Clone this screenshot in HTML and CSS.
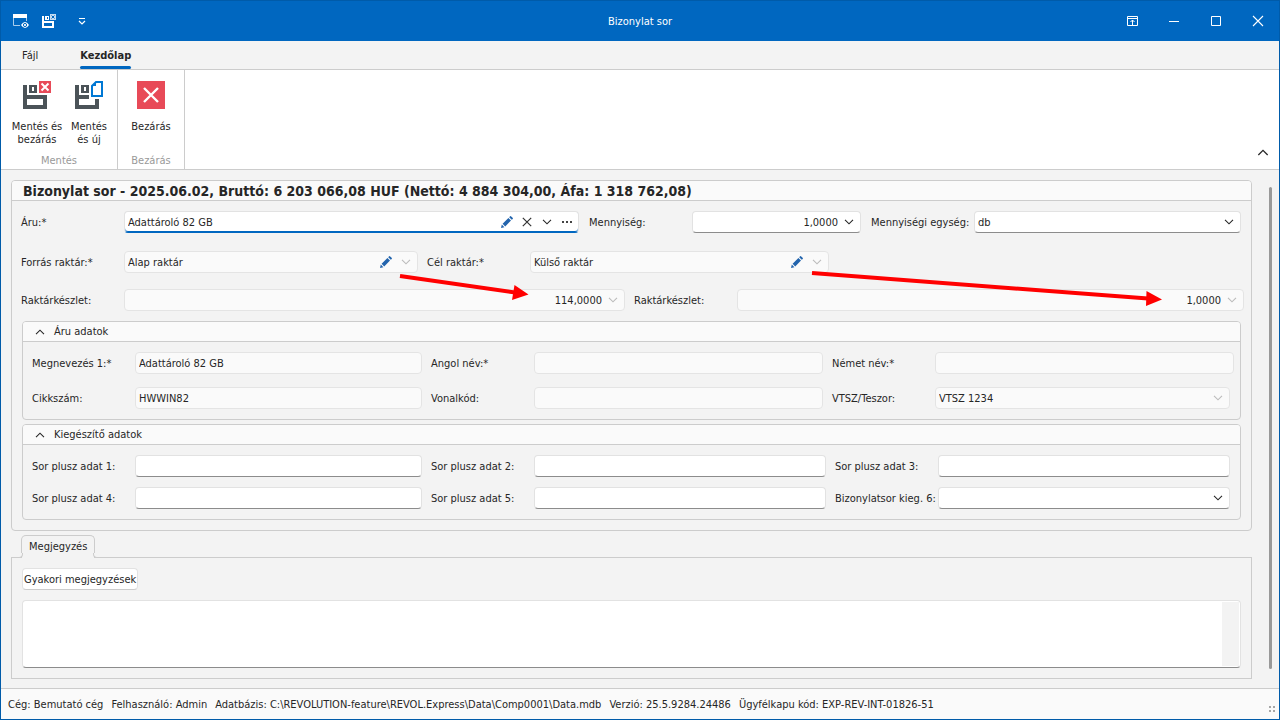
FILE: index.html
```html
<!DOCTYPE html>
<html lang="hu">
<head>
    <meta charset="UTF-8">
    <meta name="viewport" content="width=device-width, initial-scale=1.0">
    <title>Bizonylat sor</title>
    <link rel="stylesheet" href="styles.css">
</head>
<body>

<!-- shared icons -->
<svg class="sprite" aria-hidden="true">
    <symbol id="chevron-down" viewBox="0 0 10 6"><path d="M1 .8 5 4.8 9 .8" fill="none" stroke="currentColor" stroke-width="1.1"/></symbol>
    <symbol id="chevron-up" viewBox="0 0 10 6"><path d="M1 5.2 5 1.2 9 5.2" fill="none" stroke="currentColor" stroke-width="1.1"/></symbol>
    <symbol id="pencil" viewBox="0 0 12 12"><path d="M0 12 .8 8.6 3.4 11.2ZM1.6 7.8 7.4 2 10 4.6 4.2 10.4ZM8.2 1.2 9.1.3Q9.6-.2 10.2.4L11.6 1.8Q12.2 2.4 11.7 2.9L10.8 3.8Z" fill="#2264ad"/></symbol>
</svg>

<div class="window">
    <header class="titlebar">
        <div class="quick-access">
            <button class="title-btn" type="button" aria-label="Nézet">
                <svg width="16" height="14" viewBox="0 0 16 14">
                    <path d="M0 0H14V4H0Z" fill="#fff"/>
                    <path d="M.5 4V11.5H7M13.5 4V7" fill="none" stroke="#a9cdec"/>
                    <path d="M8 11Q12 5 16 11Q12 17 8 11Z" fill="#fff"/>
                    <circle cx="12" cy="11" r="1.6" fill="#fff" stroke="#0067c0"/>
                </svg>
            </button>
            <button class="title-btn" type="button" aria-label="Mentés és bezárás">
                <svg width="14" height="14" viewBox="0 0 14 14">
                    <path d="M0 2H2V7H12V14H0ZM2 9V12H10V9Z" fill="#fff" fill-rule="evenodd"/>
                    <path d="M3 2H7V6H3ZM5 3V5H6V3Z" fill="#fff" fill-rule="evenodd"/>
                    <path d="M8 0H14V6H8Z" fill="#c5dcf1"/>
                    <path d="M9.5 1.5 12.5 4.5M12.5 1.5 9.5 4.5" stroke="#0067c0"/>
                </svg>
            </button>
            <button class="title-btn" type="button" aria-label="Gyorselérés testreszabása">
                <svg width="8" height="8" viewBox="0 0 8 8"><path d="M1 1.5H7M1 4 4 7 7 4" fill="none" stroke="#fff" stroke-width="1.2"/></svg>
            </button>
        </div>
        <h1 class="window-title">Bizonylat sor</h1>
        <div class="window-buttons">
            <button class="title-btn" type="button" aria-label="Menüszalag megjelenítése">
                <svg width="11" height="10" viewBox="0 0 11 10"><path d="M.5.5H10.5V9.5H.5ZM.5 2.5H10.5M5.5 9V4M3.5 6 5.5 4 7.5 6" fill="none" stroke="#fff"/></svg>
            </button>
            <button class="title-btn" type="button" aria-label="Kis méret">
                <svg width="10" height="10" viewBox="0 0 10 10"><path d="M0 5.5H10" stroke="#fff"/></svg>
            </button>
            <button class="title-btn" type="button" aria-label="Teljes méret">
                <svg width="10" height="10" viewBox="0 0 10 10"><path d="M.5.5H9.5V9.5H.5Z" fill="none" stroke="#fff"/></svg>
            </button>
            <button class="title-btn" type="button" aria-label="Ablak bezárása">
                <svg width="12" height="12" viewBox="0 0 12 12"><path d="M1 1 11 11M11 1 1 11" stroke="#fff" stroke-width="1.1"/></svg>
            </button>
        </div>
    </header>

    <nav class="ribbon-tabs">
        <a class="ribbon-tab" href="#">Fájl</a>
        <a class="ribbon-tab active" href="#">Kezdőlap</a>
    </nav>

    <section class="ribbon">
        <div class="ribbon-group">
            <div class="ribbon-items wide">
                <button class="ribbon-btn" type="button">
                    <svg width="28" height="28" viewBox="0 0 28 28">
                        <path d="M0 4H4V14H24V28H0ZM4 18V24H20V18Z" fill="#4b5358" fill-rule="evenodd"/>
                        <path d="M6 4H14V12H6ZM9 6V10H11V6Z" fill="#4b5358" fill-rule="evenodd"/>
                        <path d="M16 0H28V12H16Z" fill="#e84a58"/>
                        <path d="M18.5 2.5 25.5 9.5M25.5 2.5 18.5 9.5" stroke="#fff" stroke-width="2"/>
                    </svg>
                    <span>Mentés és<br>bezárás</span>
                </button>
                <button class="ribbon-btn" type="button">
                    <svg width="28" height="28" viewBox="0 0 28 28">
                        <path d="M0 4H4V14H14V18H4V24H20V18H24V28H0Z" fill="#4b5358"/>
                        <path d="M6 4H14V12H6ZM9 6V10H11V6Z" fill="#4b5358" fill-rule="evenodd"/>
                        <path d="M21 1H27V15H17V5Z" fill="#fff" stroke="#0078d4" stroke-width="2"/>
                        <path d="M21 1V5H17Z" fill="#0078d4"/>
                    </svg>
                    <span>Mentés<br>és új</span>
                </button>
            </div>
            <div class="ribbon-caption">Mentés</div>
        </div>
        <div class="ribbon-group">
            <div class="ribbon-items">
                <button class="ribbon-btn" type="button">
                    <svg width="28" height="28" viewBox="0 0 28 28">
                        <path d="M0 0H28V28H0Z" fill="#e84a58"/>
                        <path d="M7 7 21 21M21 7 7 21" stroke="#fff" stroke-width="2.4"/>
                    </svg>
                    <span>Bezárás</span>
                </button>
            </div>
            <div class="ribbon-caption">Bezárás</div>
        </div>
        <button class="ribbon-collapse" type="button" aria-label="Menüszalag összecsukása">
            <svg width="12" height="7"><use href="#chevron-up"/></svg>
        </button>
    </section>

    <main class="content">
        <div class="form">
            <section class="group">
                <h2 class="group-title">Bizonylat sor - 2025.06.02, Bruttó: 6 203 066,08 HUF (Nettó: 4 884 304,00, Áfa: 1 318 762,08)</h2>
                <div class="group-body">
                    <div class="row row-item">
                        <label for="aru">Áru:*</label>
                        <div class="field focused">
                            <input id="aru" type="text" value="Adattároló 82 GB">
                            <button class="field-btn" type="button" aria-label="Szerkesztés"><svg width="12" height="12"><use href="#pencil"/></svg></button>
                            <button class="field-btn" type="button" aria-label="Törlés"><svg width="10" height="10" viewBox="0 0 10 10"><path d="M.8.8 9.2 9.2M9.2.8.8 9.2" stroke="#333" stroke-width="1.2"/></svg></button>
                            <button class="field-btn" type="button" aria-label="Lista"><svg width="10" height="6"><use href="#chevron-down"/></svg></button>
                            <button class="field-btn" type="button" aria-label="Keresés"><svg width="10" height="2" viewBox="0 0 10 2"><path d="M0 0H2V2H0ZM4 0H6V2H4ZM8 0H10V2H8Z" fill="#444"/></svg></button>
                        </div>
                        <label for="mennyiseg">Mennyiség:</label>
                        <div class="field number">
                            <input id="mennyiseg" type="text" value="1,0000">
                            <button class="field-btn" type="button" aria-label="Számológép"><svg width="10" height="6"><use href="#chevron-down"/></svg></button>
                        </div>
                        <label for="egyseg">Mennyiségi egység:</label>
                        <div class="field">
                            <select id="egyseg"><option>db</option></select>
                            <svg class="select-arrow" width="10" height="6"><use href="#chevron-down"/></svg>
                        </div>
                    </div>
                    <div class="row row-stores">
                        <label for="forras">Forrás raktár:*</label>
                        <div class="field readonly">
                            <input id="forras" type="text" value="Alap raktár" readonly>
                            <button class="field-btn" type="button" aria-label="Szerkesztés"><svg width="12" height="12"><use href="#pencil"/></svg></button>
                            <button class="field-btn" type="button" aria-label="Lista"><svg width="10" height="6"><use href="#chevron-down"/></svg></button>
                        </div>
                        <label for="cel">Cél raktár:*</label>
                        <div class="field readonly">
                            <input id="cel" type="text" value="Külső raktár" readonly>
                            <button class="field-btn" type="button" aria-label="Szerkesztés"><svg width="12" height="12"><use href="#pencil"/></svg></button>
                            <button class="field-btn" type="button" aria-label="Lista"><svg width="10" height="6"><use href="#chevron-down"/></svg></button>
                        </div>
                    </div>
                    <div class="row row-stock">
                        <label for="keszlet1">Raktárkészlet:</label>
                        <div class="field number readonly">
                            <input id="keszlet1" type="text" value="114,0000" readonly>
                            <button class="field-btn" type="button" aria-label="Számológép"><svg width="10" height="6"><use href="#chevron-down"/></svg></button>
                        </div>
                        <label for="keszlet2">Raktárkészlet:</label>
                        <div class="field number readonly">
                            <input id="keszlet2" type="text" value="1,0000" readonly>
                            <button class="field-btn" type="button" aria-label="Számológép"><svg width="10" height="6"><use href="#chevron-down"/></svg></button>
                        </div>
                    </div>

                    <section class="group subgroup">
                        <h3 class="subgroup-title">
                            <button class="collapse-btn" type="button"><svg width="10" height="6"><use href="#chevron-up"/></svg>Áru adatok</button>
                        </h3>
                        <div class="group-body">
                            <div class="row row-names">
                                <label for="nev1">Megnevezés 1:*</label>
                                <div class="field readonly"><input id="nev1" type="text" value="Adattároló 82 GB" readonly></div>
                                <label for="angol">Angol név:*</label>
                                <div class="field readonly"><input id="angol" type="text" readonly></div>
                                <label for="nemet">Német név:*</label>
                                <div class="field readonly"><input id="nemet" type="text" readonly></div>
                            </div>
                            <div class="row row-codes">
                                <label for="cikkszam">Cikkszám:</label>
                                <div class="field readonly"><input id="cikkszam" type="text" value="HWWIN82" readonly></div>
                                <label for="vonalkod">Vonalkód:</label>
                                <div class="field readonly"><input id="vonalkod" type="text" readonly></div>
                                <label for="vtsz">VTSZ/Teszor:</label>
                                <div class="field readonly">
                                    <select id="vtsz" disabled><option>VTSZ 1234</option></select>
                                    <svg class="select-arrow" width="10" height="6"><use href="#chevron-down"/></svg>
                                </div>
                            </div>
                        </div>
                    </section>

                    <section class="group subgroup">
                        <h3 class="subgroup-title">
                            <button class="collapse-btn" type="button"><svg width="10" height="6"><use href="#chevron-up"/></svg>Kiegészítő adatok</button>
                        </h3>
                        <div class="group-body">
                            <div class="row row-extra">
                                <label for="plusz1">Sor plusz adat 1:</label>
                                <div class="field"><input id="plusz1" type="text"></div>
                                <label for="plusz2">Sor plusz adat 2:</label>
                                <div class="field"><input id="plusz2" type="text"></div>
                                <label for="plusz3">Sor plusz adat 3:</label>
                                <div class="field"><input id="plusz3" type="text"></div>
                            </div>
                            <div class="row row-extra">
                                <label for="plusz4">Sor plusz adat 4:</label>
                                <div class="field"><input id="plusz4" type="text"></div>
                                <label for="plusz5">Sor plusz adat 5:</label>
                                <div class="field"><input id="plusz5" type="text"></div>
                                <label for="kieg6">Bizonylatsor kieg. 6:</label>
                                <div class="field">
                                    <select id="kieg6"><option></option></select>
                                    <svg class="select-arrow" width="10" height="6"><use href="#chevron-down"/></svg>
                                </div>
                            </div>
                        </div>
                    </section>
                </div>
            </section>

            <div class="note-tabs">
                <button class="note-tab" type="button">Megjegyzés</button>
            </div>
            <section class="note-pane">
                <button class="common-notes" type="button">Gyakori megjegyzések</button>
                <div class="note-box">
                    <textarea aria-label="Megjegyzés"></textarea>
                    <div class="note-scroll"></div>
                </div>
            </section>
        </div>
        <div class="scrollbar"></div>
    </main>

    <footer class="statusbar">
        <span>Cég: Bemutató cég</span>
        <span>Felhasználó: Admin</span>
        <span>Adatbázis: C:\REVOLUTION-feature\REVOL.Express\Data\Comp0001\Data.mdb</span>
        <span>Verzió: 25.5.9284.24486</span>
        <span>Ügyfélkapu kód: EXP-REV-INT-01826-51</span>
        <svg class="grip" width="6" height="6" viewBox="0 0 6 6"><path d="M0 0H2V2H0ZM4 0H6V2H4ZM0 4H2V6H0ZM4 4H6V6H4Z" fill="#a6a6a6"/></svg>
    </footer>

    <!-- arrows from the stores to their stock -->
    <svg class="arrows" width="1280" height="720" viewBox="0 0 1280 720" aria-hidden="true">
        <path d="M400 276 515 292.5M812 273 1148 298.5" stroke="#f00" stroke-width="4"/>
        <path d="M528.5 294.5 512 300 514.5 285ZM1162 299.5 1146 306 1146.5 291Z" fill="#f00"/>
    </svg>
</div>

</body>
</html>
```
FILE: styles.css
```css
* {
    box-sizing: border-box;
}
body {
    margin: 0;
    font-family: "DejaVu Sans Condensed", "DejaVu Sans", sans-serif;
    font-size: 11px;
    line-height: 13px;
    color: #262626;
}
button, input, select, textarea {
    font: inherit;
    color: inherit;
    margin: 0;
    padding: 0;
    border: none;
    background: none;
    outline: none;
}
h1, h2, h3 {
    margin: 0;
    font-size: 11px;
    font-weight: normal;
}
svg {
    display: block;
}
.sprite {
    position: absolute;
    width: 0;
    height: 0;
}
.window {
    position: relative;
    display: flex;
    flex-direction: column;
    min-height: 100vh;
    overflow: hidden;
    border: 1px solid #005ba9;
    background-color: #f3f3f3;
}

/* Title bar */
.titlebar {
    display: grid;
    grid-template-columns: 1fr auto 1fr;
    align-items: center;
    height: 40px;
    background-color: #0067c0;
    color: #fff;
}
.quick-access {
    display: flex;
    align-items: center;
    padding-left: 6px;
}
.title-btn {
    display: flex;
    align-items: center;
    justify-content: center;
    width: 28px;
    height: 28px;
}
.quick-access .title-btn:last-child {
    margin-left: 5px;
}
.window-buttons {
    display: flex;
    justify-content: flex-end;
}
.window-buttons .title-btn {
    width: 42px;
}

/* Ribbon */
.ribbon-tabs {
    display: flex;
    gap: 42px;
    height: 29px;
    padding-left: 21px;
    border-bottom: 1px solid #ccc;
}
.ribbon-tab {
    display: flex;
    flex-direction: column;
    justify-content: space-between;
    padding-top: 8px;
    color: inherit;
    text-decoration: none;
}
.ribbon-tab.active {
    font-weight: bold;
}
.ribbon-tab.active::after {
    content: "";
    height: 3px;
    border-radius: 2px;
    background-color: #0067c0;
}
.ribbon {
    display: flex;
    height: 100px;
    background-color: #fff;
    border-bottom: 1px solid #ccc;
}
.ribbon-group {
    display: flex;
    flex-direction: column;
    justify-content: space-between;
    padding: 11px 0 2px;
    border-right: 1px solid #ccc;
}
.ribbon-items {
    display: flex;
    gap: 2px;
    padding: 0 8px;
}
.ribbon-items.wide {
    padding: 0 3px 0 11px;
}
.ribbon-btn {
    display: flex;
    flex-direction: column;
    align-items: center;
    gap: 11px;
    width: 50px;
    white-space: nowrap;
}
.ribbon-caption {
    text-align: center;
    color: #999;
}
.ribbon-collapse {
    align-self: flex-end;
    margin-left: auto;
    padding: 13px 10px;
}

/* Form */
.content {
    flex: 1;
    display: flex;
    gap: 17px;
    padding: 10px 7px 9px 10px;
}
.form {
    flex: 1;
}
.group {
    overflow: hidden;
    border: 1px solid #ccc;
    border-radius: 4px;
}
.group-title {
    height: 20px;
    padding-left: 11px;
    border-bottom: 1px solid #ccc;
    background-color: #fafafa;
    font-size: 14px;
    line-height: 20px;
    font-weight: bold;
}
.subgroup-title {
    height: 20px;
    border-bottom: 1px solid #ccc;
    background-color: #fafafa;
}
.collapse-btn {
    display: flex;
    align-items: center;
    gap: 9px;
    height: 19px;
    padding-left: 12px;
}
.group-body {
    padding: 10px 10px 10px 9px;
}
.row {
    display: grid;
    align-items: center;
}
.row label {
    white-space: nowrap;
}
.row .field + label {
    padding-left: 9px;
}
.row-item {
    grid-template-columns: 103px 455fr 113px 169fr 113px 267fr;
    margin-bottom: 18px;
}
.row-item .field + label {
    padding-left: 10px;
}
.row-stores {
    grid-template-columns: 103px 294fr 112px 299fr 412fr;
    margin-bottom: 16px;
}
.row-stock {
    grid-template-columns: 103px 501fr 112px 507fr;
    margin-right: -3px;
    margin-bottom: 10px;
}
.row-names {
    grid-template-columns: 103px 287fr 112px 289fr 112px 299fr;
    margin-right: -4px;
    margin-bottom: 13px;
}
.row-codes {
    grid-template-columns: 103px 287fr 112px 289fr 112px 295fr;
}
.row-extra {
    grid-template-columns: 103px 287fr 112px 292fr 112px 292fr;
}
.row-extra + .row-extra {
    margin-top: 10px;
}
.subgroup {
    margin-left: 1px;
}
.subgroup + .subgroup {
    margin-top: 4px;
}
.field {
    display: flex;
    align-items: center;
    height: 22px;
    min-width: 0;
    padding: 0 1px 0 3px;
    border: 1px solid #e2e2e2;
    border-bottom-color: #8c8c8c;
    border-radius: 4px;
    background-color: #fff;
}
.field.focused {
    border-bottom-color: #0067c0;
    box-shadow: inset 0 -1px #0067c0;
}
.field.readonly {
    border-color: #e4e4e4;
    background-color: #fafafa;
}
.field input, .field select {
    flex: 1;
    min-width: 0;
    height: 18px;
}
.field select {
    appearance: none;
    opacity: 1;
}
.field.number input {
    padding-right: 1px;
    text-align: right;
}
.field-btn {
    display: flex;
    align-items: center;
    justify-content: center;
    width: 20px;
    height: 18px;
}
.select-arrow {
    margin: 0 5px;
}
.readonly use[href="#chevron-down"] {
    color: #bbb;
}

/* Notes */
.note-tabs {
    display: flex;
    padding: 4px 0 0 10px;
    margin-bottom: -1px;
}
.note-tab {
    position: relative;
    height: 23px;
    padding: 0 7px 2px;
    border: 1px solid #ccc;
    border-bottom: none;
    border-radius: 5px 5px 0 0;
    background-color: #f3f3f3;
}
/* rounded feet of the tab */
.note-tab::before, .note-tab::after {
    content: "";
    position: absolute;
    bottom: 0;
    width: 4px;
    height: 4px;
    border-bottom: 1px solid #ccc;
    background-color: #f3f3f3;
}
.note-tab::before {
    left: -4px;
    border-right: 1px solid #ccc;
    border-bottom-right-radius: 4px;
}
.note-tab::after {
    right: -4px;
    border-left: 1px solid #ccc;
    border-bottom-left-radius: 4px;
}
.note-pane {
    padding: 10px;
    border: 1px solid #ccc;
}
.common-notes {
    display: block;
    height: 22px;
    padding: 0 1px;
    border: 1px solid #e2e2e2;
    border-bottom-color: #ccc;
    border-radius: 4px;
    background-color: #fff;
}
.note-box {
    display: flex;
    height: 68px;
    margin-top: 10px;
    padding: 1px;
    border: 1px solid #e2e2e2;
    border-bottom-color: #8c8c8c;
    border-radius: 4px;
    background-color: #fff;
}
.note-box textarea {
    flex: 1;
    resize: none;
}
.note-scroll {
    width: 17px;
    background-color: #f3f3f3;
}
.scrollbar {
    width: 3px;
    margin: 7px 0 10px;
    border-radius: 2px;
    background-color: #999;
}

/* Status bar */
.statusbar {
    display: flex;
    align-items: center;
    gap: 8px;
    height: 31px;
    padding: 0 4px 0 7px;
    border-top: 1px solid #ccc;
    background-color: #fafafa;
    white-space: nowrap;
}
.grip {
    align-self: flex-end;
    margin: 0 0 7px auto;
}
.arrows {
    position: absolute;
    top: -1px;
    left: -1px;
    pointer-events: none;
}
```
